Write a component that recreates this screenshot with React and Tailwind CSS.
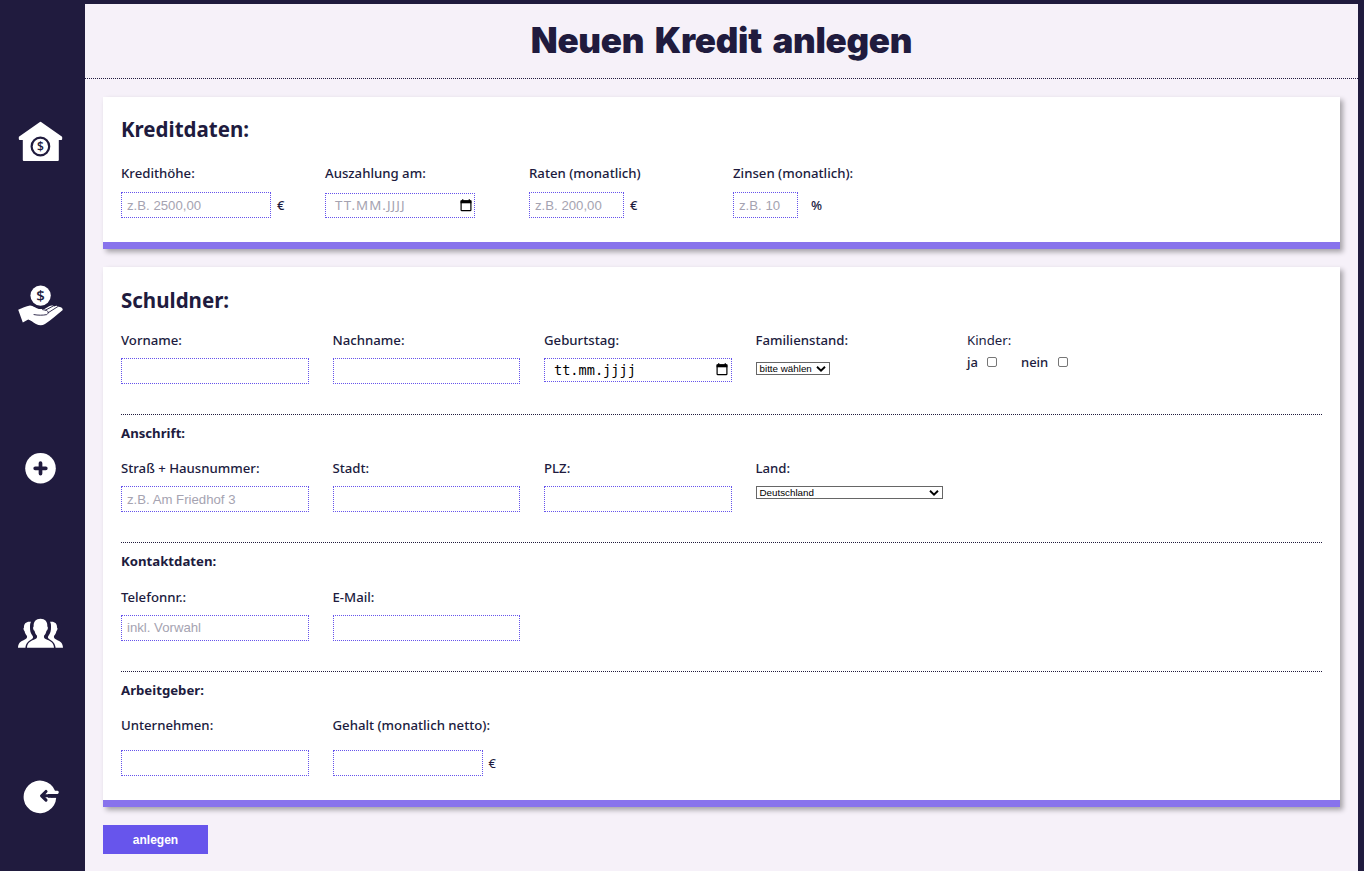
import React from "react";

const NAVY = "#201b3e";

function HouseIcon() {
  return (
    <svg width="45" height="45" viewBox="0 0 45 45">
      <path
        d="M22.5 3.8 L43.2 18.2 V20 H39.8 V41 H5.8 V20 H1.8 V18.2 Z"
        fill="#fff"
        stroke="#fff"
        strokeWidth="2"
        strokeLinejoin="round"
      />
      <circle cx="22.4" cy="27.5" r="8.8" fill="#fff" stroke={NAVY} strokeWidth="2.2" />
      <text x="22.4" y="31.8" textAnchor="middle" fontSize="12" fontWeight="600" fontFamily="Open Sans, sans-serif" fill={NAVY}>$</text>
    </svg>
  );
}

function HandIcon() {
  return (
    <svg width="45" height="45" viewBox="0 0 45 45">
      <circle cx="22.6" cy="12.6" r="10.2" fill="#fff" />
      <text x="22.6" y="17.9" textAnchor="middle" fontSize="15" fontWeight="600" fontFamily="Open Sans, sans-serif" fill={NAVY}>$</text>
      <path
        d="M0.2 26.8 C4 25.2 8 23 12 22.4 C15 22.4 19 26 22 26 H26.5 L31.5 23 C33.5 22 35.5 22.4 36.2 23.4 C38 22.4 39.6 22.6 40.5 23.8 C42.5 23.8 44.8 24.6 44.8 27 C40 31 33 37 27 41 C24 43 21 42.6 18 41 C15 39.4 12.5 37 10.2 36.5 L4.8 39.4 Z"
        fill="#fff"
      />
      <path
        d="M16 31.6 C20 32.4 25 32.4 28.6 31.6 C30.6 30.8 30.6 28.4 28.6 27.4 L24.5 26.6 M27.8 27 L35.6 22.8 M30.4 29.6 L39.8 23.6"
        fill="none"
        stroke={NAVY}
        strokeWidth="0.9"
        strokeLinecap="round"
      />
    </svg>
  );
}

function PlusIcon() {
  return (
    <svg width="45" height="45" viewBox="0 0 45 45">
      <circle cx="22.5" cy="22.3" r="15.3" fill="#fff" />
      <path d="M22.5 17 V27.6 M17.2 22.3 H27.8" stroke={NAVY} strokeWidth="3.7" strokeLinecap="round" />
    </svg>
  );
}

const sidePerson =
  "M13 11.8 C8.6 11 5.6 13.4 6 17.6 C5 18.2 5.6 20.6 6.6 21.2 C7 23.4 8 24.8 9 26 C9.4 28 8.4 28.8 6.4 29.8 C2.6 31.6 0.2 33 0 37.7 H7.4 C8 32.6 10.8 31 14 29 C15.8 27.6 15 26.6 14 25 C12.4 22.6 12 20 12 17.4 C12 15 12 13.2 13 11.8 Z";

function PeopleIcon() {
  return (
    <svg width="45" height="45" viewBox="0 0 45 45">
      <path d={sidePerson} fill="#fff" />
      <path transform="translate(45 0) scale(-1 1)" d={sidePerson} fill="#fff" />
      <path
        d="M22.5 8.8 C18 8.8 15.2 11.6 15.7 16.6 C14.6 17.2 15.2 20.4 16.5 20.8 C17 23 17.8 24.6 19 25.8 C19.4 28 18.4 28.8 15.8 29.8 C12 31.4 9.3 33 9 37.7 H36 C35.7 33 33 31.4 29.2 29.8 C26.6 28.8 25.6 28 26 25.8 C27.2 24.6 28 23 28.5 20.8 C29.8 20.4 30.4 17.2 29.3 16.6 C29.8 11.6 27 8.8 22.5 8.8 Z"
        fill="#fff"
      />
    </svg>
  );
}

function LogoutIcon() {
  return (
    <svg width="45" height="45" viewBox="0 0.7 45 45">
      <path
        d="M37 17.4 A16.3 16.3 0 1 0 38.2 24.4 H30 V20.6 H39.5 C41.2 20.6 41.2 17.4 39.5 17.4 Z"
        fill="#fff"
      />
      <path
        d="M34 22.5 H24.5 M28 18.2 L23.6 22.5 L28 26.8"
        fill="none"
        stroke={NAVY}
        strokeWidth="3.1"
        strokeLinecap="round"
        strokeLinejoin="round"
      />
      <path d="M33 22.5 H41" stroke={NAVY} strokeWidth="3.5" />
    </svg>
  );
}

function CalendarIcon() {
  return (
    <svg width="12" height="13" viewBox="0 0 12 13" className="mb-px shrink-0">
      <path d="M2.7 0.3 V2 M9.3 0.3 V2" stroke="#000" strokeWidth="1.3" />
      <rect x="1.1" y="1.9" width="9.8" height="9.8" rx="0.8" fill="none" stroke="#000" strokeWidth="1.2" />
      <path d="M0.6 1.4 H11.4 V4.3 H0.6 Z" fill="#000" />
    </svg>
  );
}

const box =
  "block border border-dotted border-[#6654ec] bg-white px-[5px] font-['Liberation_Sans',sans-serif] text-[13.2px] text-black outline-none placeholder:text-[#a5a3b1]";

function Input({ size = "h-[26px] w-full", placeholder }) {
  return <input type="text" placeholder={placeholder} className={`${box} ${size}`} />;
}

function Label({ children, className = "" }) {
  return <label className={`block whitespace-nowrap text-[13.2px] leading-[18px] ${className}`}>{children}</label>;
}

function Select({ value, className }) {
  return (
    <div className={`flex h-[13px] items-center justify-between border border-[#666] bg-white px-[3px] font-['Liberation_Sans',sans-serif] text-[9.8px] leading-none text-black ${className}`}>
      <span>{value}</span>
      <svg width="10" height="6" viewBox="0 0 10 6">
        <path d="M1 0.8 L5 4.6 L9 0.8" fill="none" stroke="#000" strokeWidth="1.9" />
      </svg>
    </div>
  );
}

function Check() {
  return <input type="checkbox" className="block h-[10px] w-[10px] appearance-none rounded-[2px] border border-[#767676] bg-white" />;
}

function Divider() {
  return <div className="mt-[30px] border-t border-dotted border-[#201b3e]" />;
}

const card =
  "border-b-[7px] border-[#8873ec] bg-white px-[18px] shadow-[3px_3px_5px_rgba(0,0,0,0.33)]";
const grid = "grid grid-cols-[repeat(5,187.5px)] gap-x-[24px] font-medium";
const section = "mt-[9px] text-[13.2px] font-bold leading-[18px]";

export default function App() {
  return (
    <div className="flex h-[871px] w-[1364px] overflow-hidden bg-[#201b3e] pr-[6px] pt-[4px] font-['Noto_Sans',sans-serif] text-[#201b3e]">
      <nav className="flex w-[85px] shrink-0 flex-col pr-[4px] pt-[56px]">
        {[HouseIcon, HandIcon, PlusIcon, PeopleIcon, LogoutIcon].map((Icon, i) => (
          <a key={i} className="flex h-[163.6px] shrink-0 items-center justify-center">
            <Icon />
          </a>
        ))}
      </nav>
      <main className="min-w-0 flex-1 bg-[#f6f1f9]">
        <header className="flex h-[75px] items-start justify-center border-b border-dotted border-[#201b3e] pt-[14px]">
          <h1 className="whitespace-nowrap font-['Inter',sans-serif] text-[35px] font-black leading-[44px] tracking-[-0.3px] [word-spacing:4px]">Neuen Kredit anlegen</h1>
        </header>
        <form className="px-[18px] pt-[18px]">
          <section className={`${card} h-[152px] pt-[18px]`}>
            <h2 className="text-[20.5px] font-bold leading-[28px]">Kreditdaten:</h2>
            <div className="mt-[21px] grid grid-cols-[repeat(4,204px)] font-medium">
              <div>
                <Label>Kredithöhe:</Label>
                <div className="mt-[10px] flex items-center gap-[6px] text-[13px]">
                  <Input size="h-[26px] w-[150px]" placeholder="z.B. 2500,00" />
                  <span className="pt-[2px]">€</span>
                </div>
              </div>
              <div>
                <Label>Auszahlung am:</Label>
                <div className="mt-[11px] flex h-[25px] w-[150px] items-center justify-between border border-dotted border-[#6654ec] pl-[9px] pr-[2px] text-[13.33px] font-normal tracking-[1.05px] text-[#a5a3b1]">
                  <span className="pt-px">TT.MM.JJJJ</span>
                  <CalendarIcon />
                </div>
              </div>
              <div>
                <Label>Raten (monatlich)</Label>
                <div className="mt-[10px] flex items-center gap-[6px] text-[13px]">
                  <Input size="h-[26px] w-[95px]" placeholder="z.B. 200,00" />
                  <span className="pt-[2px]">€</span>
                </div>
              </div>
              <div>
                <Label>Zinsen (monatlich):</Label>
                <div className="mt-[10px] flex items-center gap-[13px] text-[13px]">
                  <Input size="h-[26px] w-[65px]" placeholder="z.B. 10" />
                  <span className="pt-[2px]">%</span>
                </div>
              </div>
            </div>
          </section>

          <section className={`${card} mt-[18px] h-[540px] pt-[19px]`}>
            <h2 className="text-[20.5px] font-bold leading-[28px]">Schuldner:</h2>
            <div className={`${grid} mt-[17px] h-[53px]`}>
              <div>
                <Label className="mb-[9px]">Vorname:</Label>
                <Input />
              </div>
              <div>
                <Label className="mb-[9px]">Nachname:</Label>
                <Input />
              </div>
              <div>
                <Label className="mb-[9px]">Geburtstag:</Label>
                <div className="flex h-[24px] items-center justify-between border border-dotted border-[#6654ec] pl-[9px] pr-[3px] font-['DejaVu_Sans_Mono',monospace] text-[13.6px] font-normal text-black">
                  <span className="pt-px">tt.mm.jjjj</span>
                  <CalendarIcon />
                </div>
              </div>
              <div>
                <Label className="mb-[13px]">Familienstand:</Label>
                <Select value="bitte wählen" className="w-[74px]" />
              </div>
              <div>
                <Label className="mb-[4px] font-normal">Kinder:</Label>
                <div className="flex items-center text-[13px] leading-[18px]">
                  <span className="w-[20px]">ja</span>
                  <Check />
                  <span className="ml-[24px] w-[36.5px]">nein</span>
                  <Check />
                </div>
              </div>
            </div>
            <Divider />

            <h3 className={section}>Anschrift:</h3>
            <div className={`${grid} mt-[17px] h-[53px]`}>
              <div>
                <Label className="mb-[9px]">Straß + Hausnummer:</Label>
                <Input placeholder="z.B. Am Friedhof 3" />
              </div>
              <div>
                <Label className="mb-[9px]">Stadt:</Label>
                <Input />
              </div>
              <div>
                <Label className="mb-[9px]">PLZ:</Label>
                <Input />
              </div>
              <div>
                <Label className="mb-[9px]">Land:</Label>
                <Select value="Deutschland" className="w-full" />
              </div>
            </div>
            <Divider />

            <h3 className={section}>Kontaktdaten:</h3>
            <div className={`${grid} mt-[18px] h-[53px]`}>
              <div>
                <Label className="mb-[9px]">Telefonnr.:</Label>
                <Input size="h-[26px] w-full pb-[1px]" placeholder="inkl. Vorwahl" />
              </div>
              <div>
                <Label className="mb-[9px]">E-Mail:</Label>
                <Input />
              </div>
            </div>
            <Divider />

            <h3 className={section}>Arbeitgeber:</h3>
            <div className={`${grid} mt-[17px]`}>
              <div>
                <Label className="mb-[16px]">Unternehmen:</Label>
                <Input />
              </div>
              <div>
                <Label className="mb-[16px]">Gehalt (monatlich netto):</Label>
                <div className="flex items-center gap-[6px] text-[13px] font-normal">
                  <Input size="h-[26px] w-[150px]" />
                  <span className="pt-[2px]">€</span>
                </div>
              </div>
            </div>
          </section>

          <button
            type="button"
            className="mt-[18px] block h-[29px] w-[105px] bg-[#6755ec] font-['Liberation_Sans',sans-serif] text-[12px] font-bold text-white"
          >
            anlegen
          </button>
        </form>
      </main>
    </div>
  );
}
